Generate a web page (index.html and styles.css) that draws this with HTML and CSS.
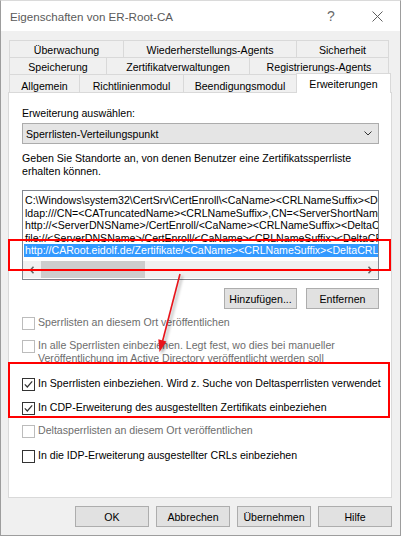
FILE: index.html
```html
<!DOCTYPE html>
<html lang="de">
<head>
<meta charset="utf-8">
<title>Eigenschaften von ER-Root-CA</title>
<link rel="stylesheet" href="styles.css">
</head>
<body>
<div class="window">
  <div class="titlebar">
    <div class="title">Eigenschaften von ER-Root-CA</div>
    <div class="tb-btn help">?</div>
    <div class="tb-btn close">
      <svg width="11" height="11" viewBox="0 0 11 11"><path d="M0.5 0.5 L10.5 10.5 M10.5 0.5 L0.5 10.5" stroke="#5f5f5f" stroke-width="1" fill="none"/></svg>
    </div>
  </div>
  <div class="client">
    <div class="tabs">
      <div class="tab-row">
        <div class="tab t-ueberwachung">Überwachung</div>
        <div class="tab t-wiederherstellung">Wiederherstellungs-Agents</div>
        <div class="tab t-sicherheit">Sicherheit</div>
      </div>
      <div class="tab-row">
        <div class="tab t-speicherung">Speicherung</div>
        <div class="tab t-zertverw">Zertifikatverwaltungen</div>
        <div class="tab t-registrierung">Registrierungs-Agents</div>
      </div>
      <div class="tab-row last">
        <div class="tab t-allgemein">Allgemein</div>
        <div class="tab t-richtlinie">Richtlinienmodul</div>
        <div class="tab t-beendigung">Beendigungsmodul</div>
        <div class="tab selected t-erweiterungen">Erweiterungen</div>
      </div>
    </div>

    <div class="panel">
      <div class="label">Erweiterung auswählen:</div>
      <div class="select">
        <span>Sperrlisten-Verteilungspunkt</span>
        <svg width="8" height="5" viewBox="0 0 8 5"><path d="M0.5 0.5 L4 4 L7.5 0.5" stroke="#333" stroke-width="1" fill="none"/></svg>
      </div>
      <div class="desc">Geben Sie Standorte an, von denen Benutzer eine Zertifikatssperrliste<br>erhalten können.</div>

      <div class="listbox">
        <div class="lines">
          <div class="line">C:\Windows\system32\CertSrv\CertEnroll\&lt;CaName&gt;&lt;CRLNameSuffix&gt;&lt;DeltaCRLAllowed&gt;.crl</div>
          <div class="line">ldap:///CN=&lt;CATruncatedName&gt;&lt;CRLNameSuffix&gt;,CN=&lt;ServerShortName&gt;,CN=CDP,CN=Public Key Services</div>
          <div class="line">http://&lt;ServerDNSName&gt;/CertEnroll/&lt;CaName&gt;&lt;CRLNameSuffix&gt;&lt;DeltaCRLAllowed&gt;.crl</div>
          <div class="line">file://&lt;ServerDNSName&gt;/CertEnroll/&lt;CaName&gt;&lt;CRLNameSuffix&gt;&lt;DeltaCRLAllowed&gt;.crl</div>
          <div class="line sel">http://CARoot.eidolf.de/Zertifikate/&lt;CaName&gt;&lt;CRLNameSuffix&gt;&lt;DeltaCRLAllowed&gt;.crl</div>
        </div>
        <div class="hscroll">
          <div class="sb-arrow">
            <svg width="6" height="8" viewBox="0 0 6 8"><path d="M4.5 0.8 L1.5 4 L4.5 7.2" stroke="#606060" stroke-width="1.5" fill="none"/></svg>
          </div>
          <div class="sb-thumb"></div>
          <div class="sb-track"></div>
          <div class="sb-arrow">
            <svg width="6" height="8" viewBox="0 0 6 8"><path d="M1.5 0.8 L4.5 4 L1.5 7.2" stroke="#606060" stroke-width="1.5" fill="none"/></svg>
          </div>
        </div>
      </div>

      <div class="btnrow">
        <div class="button">Hinzufügen...</div>
        <div class="button">Entfernen</div>
      </div>

      <div class="cb disabled g7"><span class="box"></span><span class="cb-text">Sperrlisten an diesem Ort veröffentlichen</span></div>
      <div class="cb disabled g9"><span class="box"></span><span class="cb-text">In alle Sperrlisten einbeziehen. Legt fest, wo dies bei manueller<br>Veröffentlichung im Active Directory veröffentlicht werden soll</span></div>
      <div class="cb g12"><span class="box"><svg width="11" height="11" viewBox="0 0 11 11"><path d="M1.8 5.4 L4.3 8 L9.2 2.4" stroke="#333" stroke-width="1.2" fill="none"/></svg></span><span class="cb-text">In Sperrlisten einbeziehen. Wird z. Suche von Deltasperrlisten verwendet</span></div>
      <div class="cb g10"><span class="box"><svg width="11" height="11" viewBox="0 0 11 11"><path d="M1.8 5.4 L4.3 8 L9.2 2.4" stroke="#333" stroke-width="1.2" fill="none"/></svg></span><span class="cb-text">In CDP-Erweiterung des ausgestellten Zertifikats einbeziehen</span></div>
      <div class="cb disabled g9"><span class="box"></span><span class="cb-text">Deltasperrlisten an diesem Ort veröffentlichen</span></div>
      <div class="cb g11"><span class="box"></span><span class="cb-text">In die IDP-Erweiterung ausgestellter CRLs einbeziehen</span></div>
    </div>

    <div class="footer">
      <div class="button">OK</div>
      <div class="button">Abbrechen</div>
      <div class="button">Übernehmen</div>
      <div class="button">Hilfe</div>
    </div>
  </div>

  <div class="mark mark-url"></div>
  <div class="mark mark-options"></div>
  <svg class="arrow" width="400" height="535" viewBox="1 1 400 535">
    <g class="arrow-shape">
      <path d="M180 274 L162.6 341" stroke="#e8141b" stroke-width="1.6" fill="none"/>
      <path d="M159.5 352 L158.3 339.3 L166.4 341.4 Z" fill="#e8141b"/>
    </g>
  </svg>
</div>
</body>
</html>
```

FILE: styles.css
```css
* {
  box-sizing: border-box;
}

html,
body {
  margin: 0;
  padding: 0;
}

body {
  background: #ffffff;
  font-family: "Liberation Sans", Arial, sans-serif;
  font-size: 10.6px;
  color: #000;
}

.window {
  position: relative;
  width: 401px;
  height: 536px;
  border: 1px solid #9d9d9d;
  border-top-color: #dadada;
  background: #f0f0f0;
  display: flex;
  flex-direction: column;
}

/* title bar */
.titlebar {
  flex: none;
  height: 30px;
  background: #fff;
  display: flex;
  align-items: center;
  padding-left: 9px;
}

.title {
  flex: 1;
  font-size: 11.6px;
  color: #5a5a5a;
}

.tb-btn {
  width: 46px;
  height: 30px;
  display: flex;
  align-items: center;
  justify-content: center;
  color: #6a6a6a;
}

.help {
  font-size: 14px;
}

/* client area */
.client {
  flex: 1;
  display: flex;
  flex-direction: column;
  padding: 9px 8px 0 7px;
}

.tabs {
  margin-left: 1px;
  display: flex;
  flex-direction: column;
}

.tab-row {
  display: flex;
  height: 18px;
}

.tab-row + .tab-row {
  margin-top: -1px;
}

.tab-row.last {
  align-items: flex-end;
}

.tab {
  height: 18px;
  border: 1px solid #d9d9d9;
  background: #f0f0f0;
  display: flex;
  align-items: center;
  justify-content: center;
  padding-top: 2px;
  white-space: nowrap;
}

.tab + .tab {
  margin-left: -1px;
}

.tab-row.last .tab {
  border-bottom: none;
  padding-top: 4px;
}

.tab-row.last .tab.selected {
  position: relative;
  z-index: 1;
  height: 20px;
  margin-bottom: -1px;
  background: #fff;
  padding-top: 1px;
}

.t-ueberwachung { width: 115px; }
.t-wiederherstellung { width: 174px; }
.t-sicherheit { width: 93px; }
.t-speicherung { width: 98px; }
.t-zertverw { width: 144px; }
.t-registrierung { width: 140px; }
.t-allgemein { width: 71px; }
.t-richtlinie { width: 105px; }
.t-beendigung { width: 114px; }
.t-erweiterungen { width: 95px; }

/* panel */
.panel {
  width: 384px;
  height: 406px;
  background: #fff;
  border: 1px solid #d9d9d9;
  padding: 13px 12px 0 13px;
  display: flex;
  flex-direction: column;
}

.label {
  line-height: 14px;
}

.select {
  margin-top: 3px;
  height: 21px;
  background: #e5e5e5;
  border: 1px solid #acacac;
  display: flex;
  align-items: center;
  justify-content: space-between;
  padding: 0 6px 0 3px;
}

.desc {
  margin-top: 8px;
  line-height: 13px;
}

.listbox {
  margin-top: 12px;
  height: 90px;
  border: 1px solid #828790;
  display: flex;
  flex-direction: column;
}

.lines {
  flex: 1;
  overflow: hidden;
  padding: 3px 0 0 1px;
}

.line {
  line-height: 12.5px;
  height: 12.5px;
  white-space: nowrap;
  padding-left: 1px;
}

.line.sel {
  background: #3399ff;
  color: #fff;
}

.hscroll {
  flex: none;
  height: 17px;
  margin-bottom: 1px;
  background: #f0f0f0;
  display: flex;
}

.sb-arrow {
  width: 17px;
  display: flex;
  align-items: center;
  justify-content: center;
}

.sb-thumb {
  width: 104px;
  margin-left: 1px;
  background: #cdcdcd;
}

.sb-track {
  flex: 1;
}

.btnrow {
  margin-top: 8px;
  display: flex;
  justify-content: flex-end;
  gap: 9px;
}

.button {
  width: 73px;
  height: 21px;
  background: #e1e1e1;
  border: 1px solid #adadad;
  display: flex;
  align-items: center;
  justify-content: center;
}

/* checkboxes */
.cb {
  display: flex;
  align-items: flex-start;
  line-height: 13px;
}

.cb-text {
  white-space: nowrap;
}

.cb .box {
  flex: none;
  width: 13px;
  height: 13px;
  margin: 1px 3px 0 0;
  border: 1px solid #333;
  background: #fff;
  display: flex;
  align-items: center;
  justify-content: center;
}

.cb.disabled {
  color: #6d6d6d;
}

.cb.disabled .box {
  border-color: #bcbcbc;
}

.g7 { margin-top: 7px; }
.g9 { margin-top: 9px; }
.g10 { margin-top: 10px; }
.g11 { margin-top: 11px; }
.g12 { margin-top: 12px; }

/* footer */
.footer {
  display: flex;
  justify-content: flex-end;
  gap: 7px;
  padding-top: 8px;
}

.footer .button {
  width: 74px;
}

/* annotations */
.mark {
  position: absolute;
  border: 2px solid #ff0000;
}

.mark-url {
  left: 7px;
  top: 238px;
  width: 383px;
  height: 32px;
}

.mark-options {
  left: 7px;
  top: 361px;
  width: 382px;
  height: 56px;
}

.arrow {
  position: absolute;
  left: 0;
  top: 0;
  pointer-events: none;
}

.arrow-shape {
  filter: drop-shadow(2px 2px 1.5px rgba(0, 0, 0, 0.35));
}
```
